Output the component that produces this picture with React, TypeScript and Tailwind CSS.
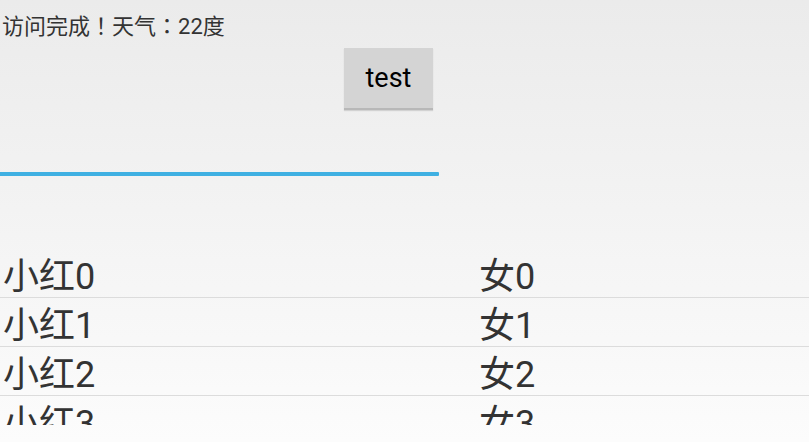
import React from "react";

const rows = [
  ["小红0", "女0"],
  ["小红1", "女1"],
  ["小红2", "女2"],
  ["小红3", "女3"],
];

function P({ c }: { c: string }) {
  return <span className="inline-block w-[22px] text-center">{c}</span>;
}

export default function App() {
  return (
    <div
      className="w-[809px] h-[442px] overflow-hidden bg-gradient-to-b from-[#ebebeb] to-[#fcfcfc] text-[#333333]"
      style={{ fontFamily: 'Roboto, "Noto Sans CJK TC", sans-serif' }}
    >
      <div className="pt-[13px] pl-[2px] text-[22px] leading-[28px] text-[#333333] whitespace-nowrap">
        访问完成<P c="！" />天气<P c="：" />22度
      </div>
      <div className="pt-[7px] pl-[344px]">
        <div className="w-[89px] h-[62px] bg-[#d4d4d4] border-b-[2px] border-[#b8b8b8] shadow-[0_1px_1px_rgba(0,0,0,0.12)] flex items-center justify-center text-[27px] text-black">
          test
        </div>
      </div>
      <div className="mt-[62px] w-[439px] h-[4px] bg-[#3fb0e2] rounded-r-[1px]" />
      <div className="mt-[73px] h-[176px] overflow-hidden">
        {rows.map(([a, b]) => (
          <div key={a} className="h-[49px] border-b border-[#dcdcdc] flex text-[36px] leading-[40px] pt-[8px] text-[#333333]">
            <div className="w-[479px] pl-[3px]">{a}</div>
            <div>{b}</div>
          </div>
        ))}
      </div>
    </div>
  );
}
